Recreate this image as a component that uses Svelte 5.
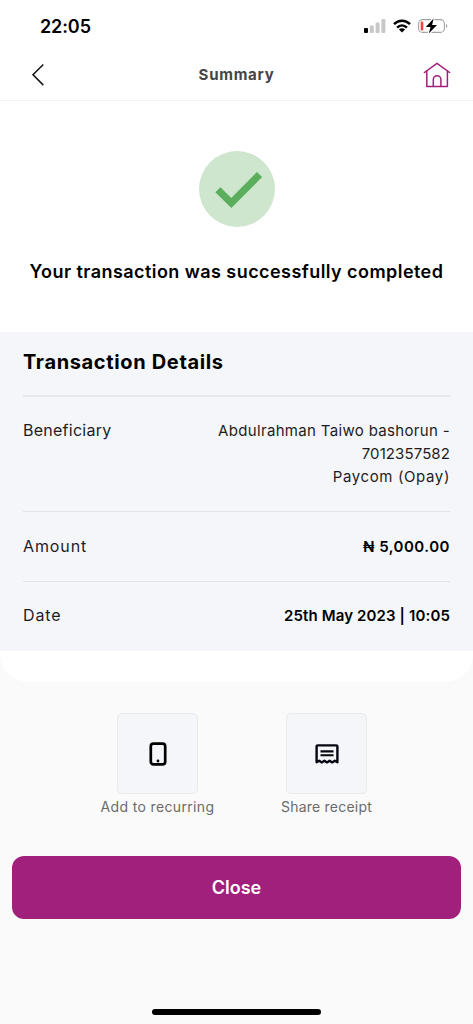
<script>
  const details = [
    {
      label: "Beneficiary",
      lines: ["Abdulrahman Taiwo bashorun -", "7012357582", "Paycom (Opay)"],
      name: "beneficiary",
    },
    { label: "Amount", lines: ["₦ 5,000.00"], name: "amount" },
    { label: "Date", lines: ["25th May 2023 | 10:05"], name: "date" },
  ];
</script>

<div class="screen">
  <div class="status-bar">
    <span class="time">22:05</span>
    <div class="indicators">
      <svg class="signal" width="22" height="14" viewBox="0 0 22 14">
        <rect x="0" y="9" width="4" height="5" rx="1" fill="#000" />
        <rect x="5.8" y="6.5" width="4" height="7.5" rx="1" fill="#c8c8c8" />
        <rect x="11.6" y="3.5" width="4" height="10.5" rx="1" fill="#c8c8c8" />
        <rect x="17.4" y="0" width="4" height="14" rx="1" fill="#c8c8c8" />
      </svg>
      <svg class="wifi" width="18" height="14" viewBox="0 0 18 14">
        <g fill="none" stroke="#000" stroke-width="2.5">
          <path d="M1 5.2C5.6.5 12.4.5 17 5.2" />
          <path d="M4.1 8.6c2.9-2.9 6.9-2.9 9.8 0" />
        </g>
        <path d="M5.9 10.5c1.8-1.7 4.4-1.7 6.2 0L9 13.6z" fill="#000" />
      </svg>
      <svg class="battery" width="30" height="16" viewBox="0 0 30 16">
        <rect x=".6" y="1.6" width="25.8" height="12.8" rx="4" fill="#fff" stroke="#a3a3a3" stroke-width="1.1" />
        <rect x="2.7" y="3.5" width="2.6" height="9" rx="1" fill="#f0453f" />
        <path d="M28 6v4c1.8-.7 1.8-3.3 0-4z" fill="#a3a3a3" />
        <path d="M15.6.4 7.8 9h4.8L10.7 15.6 19 7.100h-4.900z" fill="#000" stroke="#fff" stroke-width="2.4" paint-order="stroke" />
      </svg>
    </div>
  </div>

  <header>
    <button class="icon-button" aria-label="Back">
      <svg width="14" height="24" viewBox="0 0 14 24">
        <path d="M12.3 1.500 2 11.800l10.300 10.300" fill="none" stroke="#111" stroke-width="1.5" />
      </svg>
    </button>
    <h1>Summary</h1>
    <button class="icon-button" aria-label="Home">
      <svg width="28" height="26" viewBox="0 0 28 26">
        <g fill="none" stroke="#a1207c" stroke-width="1.5" stroke-linejoin="round" stroke-linecap="round">
          <path d="M1.4 10.500 14 1.300l12.600 9.200" />
          <path d="M3.800 9v15.500h20.600V9" />
          <path d="M10.300 24.300v-6.800a3.800 3.800 0 0 1 7.600 0v6.800" />
        </g>
      </svg>
    </button>
  </header>

  <main>
    <section class="result">
      <svg width="76" height="76" viewBox="0 0 76 76">
        <circle cx="38" cy="38" r="38" fill="#cde6cd" />
        <path d="M18.9 38.8 32.3 52 60.5 23.5" fill="none" stroke="#5aae5c" stroke-width="7.2" />
      </svg>
      <p>Your transaction was successfully completed</p>
    </section>

    <section class="details">
      <h2>Transaction Details</h2>
      {#each details as item}
        <div class="row {item.name}">
          <span class="label">{item.label}</span>
          <div class="value">
            {#each item.lines as line}
              <div>{line}</div>
            {/each}
          </div>
        </div>
      {/each}
    </section>
  </main>

  <div class="actions">
    <button class="action">
      <span class="tile">
        <svg width="18" height="24" viewBox="0 0 18 24">
          <rect x="1.8" y="1.6" width="14.4" height="20.8" rx="2.7" fill="none" stroke="#000" stroke-width="2.7" />
          <circle cx="9" cy="19" r="1.4" fill="#000" />
        </svg>
      </span>
      <span class="caption recurring">Add to recurring</span>
    </button>
    <button class="action">
      <span class="tile">
        <svg width="24" height="20" viewBox="0 0 24 20">
          <path d="M1.6 18.2V2.5q0-1.1 1.1-1.1h18.600q1.100 0 1.100 1.100v15.700l-2.600-1.500-2.600 1.700-2.600-1.700-2.600 1.700-2.600-1.700-2.600 1.700-2.600-1.700z" fill="none" stroke="#060611" stroke-width="2.4" stroke-linejoin="round" />
          <path d="M5.500 7.400h13M5.500 11.200h13" stroke="#060611" stroke-width="2.100" />
        </svg>
      </span>
      <span class="caption share">Share receipt</span>
    </button>
  </div>

  <button class="close">Close</button>
  <div class="home-indicator"></div>
</div>

<style>
  :global(body) {
    margin: 0;
    background: #fafafa;
  }

  .screen {
    display: flex;
    flex-direction: column;
    width: 473px;
    height: 1024px;
    background: #fafafa;
    color: #000;
    font-family: Inter, "Liberation Sans", sans-serif;
    overflow: hidden;
  }

  button {
    padding: 0;
    border: 0;
    background: none;
    font-family: inherit;
    cursor: pointer;
  }

  svg {
    display: block;
  }

  .status-bar {
    display: flex;
    justify-content: space-between;
    align-items: center;
    box-sizing: border-box;
    height: 52px;
    padding: 0 25px 0 40px;
    background: #fff;
  }

  .time {
    font-size: 18px;
    font-weight: 600;
    letter-spacing: -0.1px;
  }

  .indicators {
    display: flex;
    align-items: center;
    gap: 7px;
  }

  header {
    display: flex;
    justify-content: space-between;
    align-items: center;
    box-sizing: border-box;
    height: 49px;
    padding: 0 22px 3px 31px;
    background: #fff;
    border-bottom: 1px solid #f2f2f2;
  }

  header .icon-button {
    width: 28px;
  }

  h1 {
    margin: 0 9px 0 0;
    color: #454545;
    font-size: 15px;
    font-weight: 700;
    letter-spacing: 0.75px;
  }

  main {
    height: 581px;
    background: #fff;
    border-radius: 0 0 28px 28px;
  }

  .result {
    display: flex;
    flex-direction: column;
    align-items: center;
    height: 181px;
    padding-top: 50px;
  }

  .result p {
    margin: 33px 0 0;
    font-size: 18px;
    font-weight: 600;
    letter-spacing: 0.44px;
    line-height: 24px;
    white-space: nowrap;
  }

  .details {
    box-sizing: border-box;
    height: 319px;
    padding: 0 23px;
    background: #f5f6f9;
  }

  h2 {
    margin: 0;
    height: 63px;
    font-size: 20px;
    font-weight: 700;
    letter-spacing: 0.65px;
    line-height: 61px;
  }

  .row {
    display: flex;
    justify-content: space-between;
    padding: 23px 0;
    border-top: 1px solid #e2e3e7;
    line-height: 23px;
  }

  .row.beneficiary {
    padding-top: 22px;
    border-top: 2px solid #e7e8eb;
  }

  .row.date {
    padding-top: 22px;
  }

  .label {
    color: #1d1d1f;
    font-size: 16px;
    letter-spacing: 0.25px;
  }

  .amount .label,
  .date .label {
    letter-spacing: 0.9px;
  }

  .value {
    font-size: 15px;
    font-weight: 600;
    text-align: right;
    white-space: nowrap;
  }

  .beneficiary .value {
    color: #1d1d1f;
    font-weight: 400;
    letter-spacing: 0.33px;
  }

  .beneficiary .value div:nth-child(2) {
    letter-spacing: 0.1px;
  }

  .beneficiary .value div:last-child {
    letter-spacing: 0.62px;
  }

  .amount .value {
    letter-spacing: 0.5px;
  }

  .date .value {
    letter-spacing: 0.13px;
  }

  .actions {
    display: flex;
    justify-content: center;
    gap: 47px;
    padding: 31px 0 0 11px;
  }

  .action {
    display: flex;
    flex-direction: column;
    align-items: center;
    width: 122px;
  }

  .tile {
    display: flex;
    justify-content: center;
    align-items: center;
    box-sizing: border-box;
    width: 81px;
    height: 81px;
    background: #f5f6f9;
    border: 1px solid #e9eaec;
    border-radius: 5px;
  }

  .caption {
    margin-top: 3px;
    color: #6b6b6b;
    font-size: 14px;
    line-height: 20px;
    white-space: nowrap;
  }

  .recurring {
    letter-spacing: 0.35px;
  }

  .share {
    letter-spacing: 0.22px;
  }

  .close {
    height: 63px;
    margin: 39px 12px 0;
    border-radius: 12px;
    background: #a1207c;
    color: #fff;
    font-size: 18px;
    font-weight: 600;
  }

  .home-indicator {
    width: 169px;
    height: 6px;
    margin: auto auto 9px;
    border-radius: 3px;
    background: #000;
  }
</style>
